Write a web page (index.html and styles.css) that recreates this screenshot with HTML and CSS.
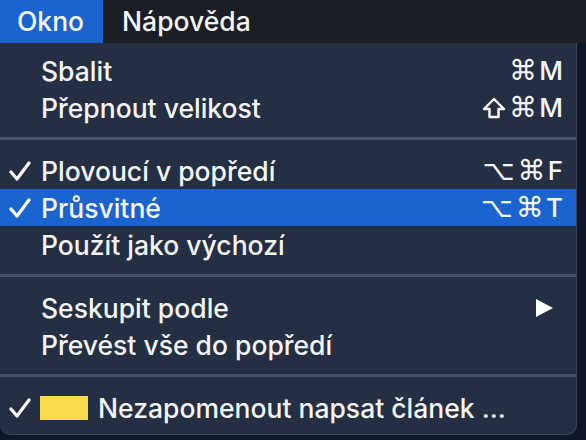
FILE: index.html
```html
<!DOCTYPE html>
<html lang="cs">
<head>
    <meta charset="UTF-8">
    <title>Okno</title>
    <link rel="stylesheet" href="styles.css">
</head>
<body>
    <div class="menubar">
        <div class="menubar-item active">Okno</div>
        <div class="menubar-item">Nápověda</div>
    </div>
    <div class="menu">
        <div class="row"><span class="check"></span><span class="label">Sbalit</span><span class="keys"><span class="sym">⌘</span>M</span></div>
        <div class="row"><span class="check"></span><span class="label">Přepnout velikost</span>
            <span class="keys">
                <svg class="shift" width="24" height="22" viewBox="0 0 24 22"><path d="M12 2 L22 12 L16.5 12 L16.5 20 L7.5 20 L7.5 12 L2 12 Z" fill="none" stroke="#fff" stroke-width="2.4" stroke-linejoin="round"/></svg><span class="sym">⌘</span>M
            </span>
        </div>
        <div class="sep"></div>
        <div class="row">
            <span class="check"><svg width="22" height="20" viewBox="0 0 22 20"><path d="M2 11 L8 18 L20 2" fill="none" stroke="#fff" stroke-width="3.2" stroke-linecap="round" stroke-linejoin="round"/></svg></span>
            <span class="label">Plovoucí v popředí</span><span class="keys"><span class="sym">⌥</span><span class="sym">⌘</span>F</span>
        </div>
        <div class="row selected">
            <span class="check"><svg width="22" height="20" viewBox="0 0 22 20"><path d="M2 11 L8 18 L20 2" fill="none" stroke="#fff" stroke-width="3.2" stroke-linecap="round" stroke-linejoin="round"/></svg></span>
            <span class="label">Průsvitné</span><span class="keys"><span class="sym">⌥</span><span class="sym">⌘</span>T</span>
        </div>
        <div class="row"><span class="check"></span><span class="label">Použít jako výchozí</span></div>
        <div class="sep"></div>
        <div class="row">
            <span class="check"></span><span class="label">Seskupit podle</span>
            <span class="keys"><svg class="arrow" width="18" height="18" viewBox="0 0 18 18"><path d="M1 0 L18 9 L1 18 Z" fill="#fff"/></svg></span>
        </div>
        <div class="row"><span class="check"></span><span class="label">Převést vše do popředí</span></div>
        <div class="sep"></div>
        <div class="row">
            <span class="check"><svg width="22" height="20" viewBox="0 0 22 20"><path d="M2 11 L8 18 L20 2" fill="none" stroke="#fff" stroke-width="3.2" stroke-linecap="round" stroke-linejoin="round"/></svg></span>
            <span class="swatch"></span>
            <span class="label">Nezapomenout napsat článek ...</span>
        </div>
    </div>
</body>
</html>
```

FILE: styles.css
```css
body {
    margin: 0;
    background: #0e1628;
    font-family: Inter, "Noto Sans", sans-serif;
    font-weight: 500;
    color: #f4f5f7;
    font-size: 26.5px;
    height: 440px;
    overflow: hidden;
}

.menubar {
    display: flex;
    height: 43px;
    background: #1c1e26;
}
.menubar-item {
    line-height: 43px;
    padding: 0 17px 0 19px;
}
.menubar-item.active {
    background: #1b64d0;
    padding: 0 19px 0 17px;
}

.menu {
    width: 576px;
    background: #252f43;
    border-right: 1px solid #3a4457;
    border-bottom: 1px solid #3a4457;
    border-radius: 0 0 10px 10px;
    padding: 9px 0 8px 0;
}

.row {
    display: flex;
    align-items: center;
    height: 37px;
    padding-right: 13px;
}
.row.selected {
    background: #1b64d0;
}
.check {
    width: 41px;
    display: flex;
    justify-content: center;
}
.check svg {
    margin-left: -1px;
    margin-top: 1px;
}
.label {
    flex: 1;
    white-space: nowrap;
}
.keys {
    font-size: 26px;
    display: flex;
    align-items: center;
}
.sym {
    font-family: "DejaVu Sans", sans-serif;
    font-weight: 400;
    font-size: 28px;
    margin-right: 2px;
}
.sym + .sym {
    margin-left: 1px;
}
.keys .shift {
    margin-right: 3px;
}
.keys .arrow {
    margin-right: 10px;
}
.swatch {
    width: 48px;
    height: 24px;
    background: #f8db4a;
    margin-right: 10px;
    margin-left: -1px;
}
.sep {
    height: 3px;
    margin: 11px 0 12px 0;
    background: #485165;
}
```
